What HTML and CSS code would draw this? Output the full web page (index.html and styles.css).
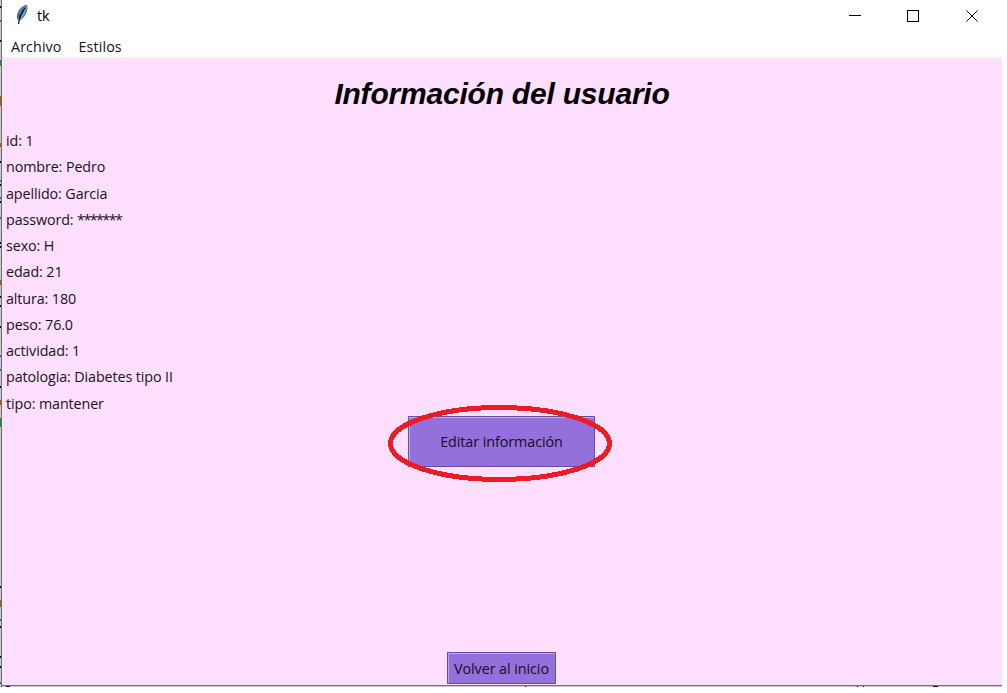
FILE: index.html
```html
<!DOCTYPE html>
<html lang="es">
<head>
<meta charset="utf-8">
<title>tk</title>
<link rel="stylesheet" href="styles.css">
</head>
<body>
<div class="desktop">
  <svg class="edge" width="2" height="687" shape-rendering="crispEdges">
    <rect width="2" height="687" fill="#c9c9c9"/>
    <path d="M0 7h1M0 41h1M0 145h1M0 162h1M0 185h1M0 202h1M0 243h1M0 247h1M0 297h1M0 306h1M0 327h1M0 387h1M0 587h1M0 627h1M0 657h1M0 667h1" stroke="#000" stroke-width="2"/>
    <path d="M0 21h1M0 181h1M0 198h1M0 218h1M0 356h1M0 370h1M0 620h1M0 683h1" stroke="#1769aa" stroke-width="2"/>
    <path d="M0 96h1v10h-1zM0 143h1v4h-1zM0 280h1v5h-1zM0 400h1v5h-1zM0 600h1v7h-1z" fill="#a85b0b"/>
    <path d="M0 60h1v6h-1zM0 418h1v9h-1z" fill="#16941a"/>
    <path d="M1.500 0v687" stroke="#707070"/>
  </svg>
  <div class="window">
    <header class="titlebar">
      <svg class="feather" width="14" height="22" viewBox="0 0 14 22">
        <path d="M11.500 1.500C7 2 3.500 6 2.500 11c-.5 3 0 4.500 1.500 5C8 15 10 11 11.500 7c.6-2 .6-4 0-5.500z" fill="#4d83bb" stroke="#59636d"/>
        <path d="M10 4C7 8 4.500 13 3.500 20M5 10l-.5 4M8 6l-2 5" fill="none" stroke="#14202b" stroke-width="1.300"/>
        <path d="M10.500 5C10 8 8 12 5.500 14.500" fill="none" stroke="#88b9e5"/>
      </svg>
      <span class="title">tk</span>
      <svg class="controls" width="132" height="14" fill="none" stroke="#000">
        <path d="M2 7.500h12M60.500 2.500h11v11h-11z" shape-rendering="crispEdges"/>
        <path d="M119.500 2.500l11 11m0-11l-11 11"/>
      </svg>
    </header>
    <nav class="menu"><span>Archivo</span><span>Estilos</span></nav>
    <main class="content">
      <h1 class="heading">Información del usuario</h1>
      <div class="info">
        <div>id: 1</div>
        <div>nombre: Pedro</div>
        <div>apellido: Garcia</div>
        <div>password: <span class="mask">*******</span></div>
        <div>sexo: H</div>
        <div>edad: 21</div>
        <div>altura: 180</div>
        <div>peso: 76.0</div>
        <div>actividad: 1</div>
        <div>patologia: Diabetes tipo II</div>
        <div>tipo: mantener</div>
      </div>
      <div class="edit-area">
        <button class="button edit">Editar información</button>
        <svg class="ring" width="226" height="80"><ellipse cx="113" cy="39.500" rx="109.500" ry="36" fill="none" stroke="#ed1c24" stroke-width="5" shape-rendering="crispEdges"/></svg>
      </div>
      <button class="button back">Volver al inicio</button>
    </main>
    <svg class="bottom" width="1000" height="2" shape-rendering="crispEdges">
      <path d="M0 .5h1000" stroke="#707070"/><path d="M0 1.500h1000" stroke="#c9c9c9"/>
      <path d="M4 1.500h4M523 1.500h1M855 1.500h1M861 1.500h1M931 1.500h5" stroke="#111"/>
    </svg>
  </div>
</div>
</body>
</html>
```
FILE: styles.css
```css
body {
  margin: 0;
  background: #fff;
  color: #191219;
  font-family: "Open Sans", "Noto Sans", sans-serif;
  font-size: 14.3px;
}
.desktop {
  display: flex;
  width: 1002px;
  height: 687px;
}
.edge, .ring, .bottom { display: block; }
.window {
  display: flex;
  flex-direction: column;
  width: 1000px;
}
.titlebar {
  display: flex;
  align-items: center;
  box-sizing: border-box;
  height: 32px;
  padding-bottom: 2px;
}
.feather { margin: 0 8px 0 13px; }
.title { color: #000; }
.controls { margin-left: auto; margin-right: 23px; }
.menu {
  display: flex;
  gap: 17px;
  box-sizing: border-box;
  height: 27px;
  padding-left: 9px;
  border-bottom: 2px solid #f0f0f0;
  line-height: 30px;
  letter-spacing: 0.1px;
}
.content {
  display: flex;
  flex-direction: column;
  align-items: center;
  height: 626px;
  background: #ffdfff;
}
.heading {
  margin: 14px 0 0;
  height: 55px;
  color: #000;
  font: italic bold 30px/41px "Liberation Sans", Arial, sans-serif;
  letter-spacing: -0.21px;
}
.info {
  align-self: stretch;
  height: 288px;
  padding-left: 4px;
  line-height: 26.25px;
  letter-spacing: -0.1px;
}
.mask { letter-spacing: -1.55px; }
.edit-area {
  position: relative;
  width: 187px;
  height: 51px;
  margin-right: 1px;
}
.button {
  box-sizing: border-box;
  padding: 0;
  border: 1px solid #66509a;
  border-radius: 0;
  background: #9370db;
  box-shadow: inset 1px 1px #bda5f0;
  color: #160d1e;
  font: inherit;
  letter-spacing: -0.05px;
}
.edit { display: block; width: 187px; height: 51px; }
.ring {
  position: absolute;
  left: -21px;
  top: -12px;
}
.back {
  width: 109px;
  height: 32px;
  margin-top: auto;
  margin-right: 1px;
  margin-bottom: 1px;
}
```
